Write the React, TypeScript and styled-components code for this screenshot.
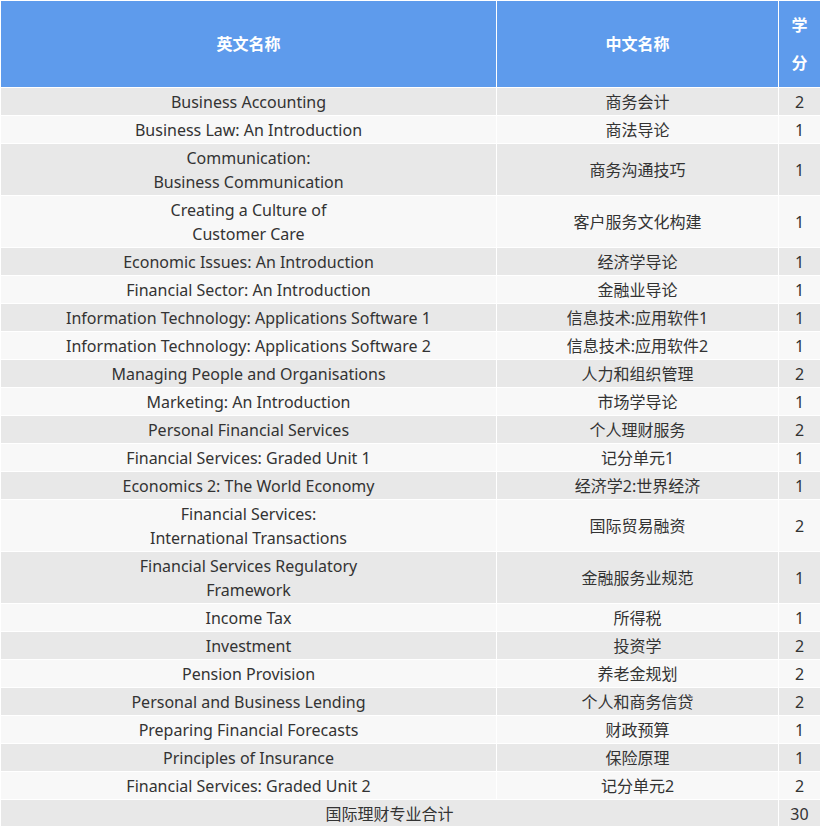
import React from 'react'
import styled, { createGlobalStyle } from 'styled-components'

const Global = createGlobalStyle`
  body {
    margin: 0;
    background: #fff;
    font-family: "Noto Sans", "Noto Sans CJK SC", sans-serif;
  }
`

const Table = styled.table`
  width: 820px;
  border-collapse: collapse;
  table-layout: fixed;
  color: #333;
  font-size: 16px;
`

const Head = styled.th`
  background: #5e9bec;
  color: #fff;
  font-weight: bold;
  line-height: 38px;
  padding: 5px 2px;
  border: 1px solid #fff;
  text-align: center;
`

const Row = styled.tr<{ $odd: boolean }>`
  background: ${p => (p.$odd ? '#e8e8e8' : '#f8f8f8')};
`

const Cell = styled.td`
  border: 1px solid #fff;
  padding: 1.5px 2px;
  line-height: 24px;
  text-align: center;
  vertical-align: middle;
`

const rows: [React.ReactNode, string, number][] = [
  ['Business Accounting', '商务会计', 2],
  ['Business Law: An Introduction', '商法导论', 1],
  [<>Communication:<br />Business Communication</>, '商务沟通技巧', 1],
  [<>Creating a Culture of<br />Customer Care</>, '客户服务文化构建', 1],
  ['Economic Issues: An Introduction', '经济学导论', 1],
  ['Financial Sector: An Introduction', '金融业导论', 1],
  ['Information Technology: Applications Software 1', '信息技术:应用软件1', 1],
  ['Information Technology: Applications Software 2', '信息技术:应用软件2', 1],
  ['Managing People and Organisations', '人力和组织管理', 2],
  ['Marketing: An Introduction', '市场学导论', 1],
  ['Personal Financial Services', '个人理财服务', 2],
  ['Financial Services: Graded Unit 1', '记分单元1', 1],
  ['Economics 2: The World Economy', '经济学2:世界经济', 1],
  [<>Financial Services:<br />International Transactions</>, '国际贸易融资', 2],
  [<>Financial Services Regulatory<br />Framework</>, '金融服务业规范', 1],
  ['Income Tax', '所得税', 1],
  ['Investment', '投资学', 2],
  ['Pension Provision', '养老金规划', 2],
  ['Personal and Business Lending', '个人和商务信贷', 2],
  ['Preparing Financial Forecasts', '财政预算', 1],
  ['Principles of Insurance', '保险原理', 1],
  ['Financial Services: Graded Unit 2', '记分单元2', 2],
]

export default function App() {
  return (
    <>
      <Global />
      <Table>
        <colgroup>
          <col style={{ width: 496 }} />
          <col style={{ width: 282 }} />
          <col style={{ width: 42 }} />
        </colgroup>
        <thead>
          <tr>
            <Head>英文名称</Head>
            <Head>中文名称</Head>
            <Head>学<br />分</Head>
          </tr>
        </thead>
        <tbody>
          {rows.map(([en, zh, credit], i) => (
            <Row key={i} $odd={i % 2 === 0}>
              <Cell>{en}</Cell>
              <Cell>{zh}</Cell>
              <Cell>{credit}</Cell>
            </Row>
          ))}
          <Row $odd>
            <Cell colSpan={2}>国际理财专业合计</Cell>
            <Cell>30</Cell>
          </Row>
        </tbody>
      </Table>
    </>
  )
}
